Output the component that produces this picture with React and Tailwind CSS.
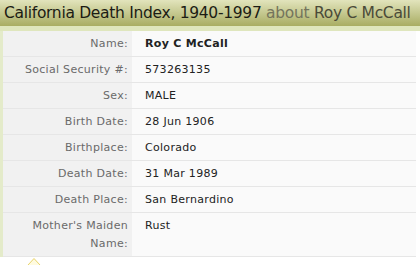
export default function App() {
  const rows = [
    ["Name:", "Roy C McCall", true],
    ["Social Security #:", "573263135"],
    ["Sex:", "MALE"],
    ["Birth Date:", "28 Jun 1906"],
    ["Birthplace:", "Colorado"],
    ["Death Date:", "31 Mar 1989"],
    ["Death Place:", "San Bernardino"],
    ["Mother's Maiden Name:", "Rust"],
  ];

  return (
    <div className="w-[420px] h-[269px] bg-white overflow-hidden font-['DejaVu_Sans',sans-serif]">
      {/* heading bar */}
      <div className="h-[26px] bg-gradient-to-b from-[#e2e4bc] to-[#a9ad62] pl-[4px] text-[15.5px] leading-[26px] tracking-[-0.3px] whitespace-nowrap">
        <span className="text-[#1c1c14]">California Death Index, 1940-1997</span>{" "}
        <span className="text-[#74745c]">about</span>{" "}
        <span className="text-[#4a4a38]">Roy C McCall</span>
      </div>
      <div className="h-[5px] bg-[#dfe6bd]" />

      <div className="w-[416px] border-l-[3px] border-[#e4ebca]">
        {rows.map(([label, value, bold], i) => (
          <div
            key={i}
            className="flex border-b border-[#e6e6e6] text-[11px] leading-[18px]"
          >
            <div className="w-[129px] shrink-0 bg-[#f1f1f1] pr-[4px] pt-[4px] pb-[3px] text-right text-[#6a6a6a] tracking-[0.3px]">
              {label}
            </div>
            <div
              className={
                "flex-1 bg-[#fafafa] pl-[13px] pt-[4px] pb-[3px] text-[#222] tracking-[0.3px] " +
                (bold ? "font-bold" : "")
              }
            >
              {value}
            </div>
          </div>
        ))}
      </div>

      {/* little pointer of a tip below */}
      <svg className="ml-[27px] block" width="14" height="8" viewBox="0 0 14 8">
        <path d="M1 8 L7 1.5 L13 8" fill="#fffbe0" stroke="#e8d36a" strokeWidth="1" />
      </svg>
    </div>
  );
}
